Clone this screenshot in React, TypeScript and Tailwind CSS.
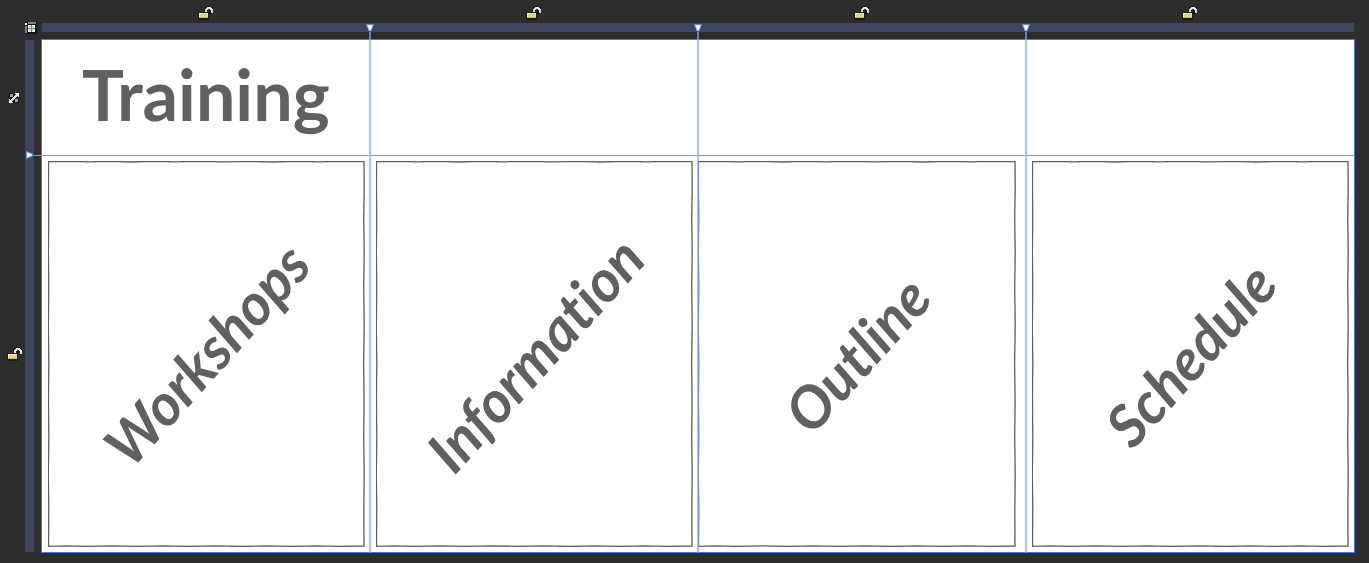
import React from "react";
import { clsx } from "clsx";

const cards = [
  { label: "Workshops", inset: "pl-1.5 pr-[5px]" },
  { label: "Information", inset: "pl-1.5 pr-[5px]" },
  { label: "Outline", inset: "pr-2.5" },
  { label: "Schedule", inset: "pl-1.5 pr-[5px]" },
];

function UnlockIcon() {
  return (
    <svg width="16" height="14" viewBox="0 0 16 14" aria-hidden="true">
      <path d="M0 6h6V2l3-2h4l2 2v6h-4v6H0z" fill="#191919" fillOpacity="0.8" />
      <path d="M7 6V3h1V2h1V1h4v1h1v1h1v4h-2V4h-1V3h-2v1H9v2z" fill="#e9e9e9" />
      <path d="M1 7h9v5H1z" fill="#e8d673" />
      <path d="M1 7h9v1H2v3H1z" fill="#fbf5c5" />
      <path d="M1 11h9v1H1z" fill="#cdb855" />
    </svg>
  );
}

function ExpandIcon() {
  return (
    <svg width="12" height="12" viewBox="0 0 12 12" aria-hidden="true">
      <path d="M1 1h10v10H1z" fill="#151515" />
      <path d="M2 2h3v3H2zM7 7h3v3H7z" fill="#8ea3dc" />
      <path d="M7 1h4v4h-1V4H9v1H8v1H7v1H6v1H5v1H4v1h1v1H1V7h1v1h1V7h1V6h1V5h1V4h1V3h1V2H7z" fill="#f6f6ee" />
    </svg>
  );
}

function GridHandleIcon() {
  return (
    <svg width="12" height="12" viewBox="0 0 12 12" aria-hidden="true">
      <path d="M0 0h12v12H0z" fill="#161616" />
      <path d="M3 0h8v2H3zM0 4h2v7H0z" fill="#858585" />
      <path d="M0 1h2v2H0zM3 3h7v7H3z" fill="#ffffff" />
      <path d="M6 3h1v7H6zM3 6h7v1H3z" fill="#5f7fc4" />
      <path d="M4 4h5v5H4z" fill="#7b8bb0" fillOpacity="0.35" />
    </svg>
  );
}

function ColumnMarker() {
  return (
    <svg width="8" height="8" viewBox="0 0 8 8" aria-hidden="true">
      <path d="M0.500 0.500h7L5 7H3z" fill="#ffffff" stroke="#5b8cf5" />
    </svg>
  );
}

function RowMarker() {
  return (
    <svg width="8" height="8" viewBox="0 0 8 8" aria-hidden="true">
      <path d="M0.500 0.500v7L7 4.500v-1z" fill="#ffffff" stroke="#5b8cf5" />
    </svg>
  );
}

function SketchFrame() {
  return (
    <svg
      className="absolute inset-0 h-full w-full"
      viewBox="0 0 317 386"
      preserveAspectRatio="none"
      aria-hidden="true"
    >
      <path
        d="M0.500 0.500L24 0.300L40 0.800L61 0.400L84 1L103 0.300L128 0.800L149 0.300L176 0.900L203 0.400L225 1L247 0.300L272 0.800L292 0.300L316 0.700L316.200 28L315.700 57L316.200 91L315.700 126L316.200 165L315.600 203L316.100 239L315.700 276L316.200 312L315.800 349L316 385L291 385.300L269 384.800L244 385.400L218 384.900L194 385.500L167 384.900L141 385.400L115 384.800L90 385.400L64 384.900L38 385.400L18 384.900L0.500 385.300L0.800 349L0.300 312L0.800 276L0.400 238L0.800 203L0.300 165L0.800 126L0.300 90L0.800 56L0.400 27Z"
        fill="none"
        stroke="#5e5e5e"
        strokeWidth="1.3"
        vectorEffect="non-scaling-stroke"
      />
    </svg>
  );
}

export default function App() {
  return (
    <div className="flex min-h-screen bg-[#2d2d2d] pr-3.5 pb-2.5 font-['Lato',sans-serif] text-[#606060] [font-variant-ligatures:none]">
      <aside className="flex w-[41px] shrink-0 flex-col">
        <div className="flex h-10 items-center justify-end pt-4 pr-1">
          <button type="button" aria-label="Select grid">
            <GridHandleIcon />
          </button>
        </div>
        <div className="flex flex-1">
          <div className="flex w-[25px] flex-col">
            <div className="flex h-[115px] items-center justify-center pl-[3px]">
              <button type="button" aria-label="Resize row 1">
                <ExpandIcon />
              </button>
            </div>
            <div className="flex flex-1 items-center justify-center pl-[5px]">
              <button type="button" aria-label="Unlock row 2">
                <UnlockIcon />
              </button>
            </div>
          </div>
          <div className="mb-px w-[9px] bg-[#3d4860]" />
        </div>
      </aside>

      <main className="relative flex min-w-0 flex-1 flex-col">
        <div className="grid h-[23px] grid-cols-4 px-px pt-1.5">
          {cards.map(({ label }) => (
            <div key={label} className="flex justify-center">
              <button type="button" aria-label={"Unlock " + label} className="h-3.5">
                <UnlockIcon />
              </button>
            </div>
          ))}
        </div>
        <div className="mx-px h-[9px] bg-[#3d4860]" />

        <section className="mt-[7px] flex flex-1 flex-col border border-[#4a78e0] bg-white">
          <header className="relative flex h-[116px] items-center border-b border-[#6f9bf5] pb-2 pl-10">
            <h1 className="text-[70px] leading-none font-bold">Training</h1>
            <span className="absolute -bottom-1 -left-4">
              <RowMarker />
            </span>
            <span className="absolute -bottom-px -left-2 h-px w-2 bg-[#6f9bf5]" />
          </header>
          <div className="grid flex-1 grid-cols-4">
            {cards.map(({ label, inset }) => (
              <div key={label} className={clsx("flex py-[5px]", inset)}>
                <article className="relative flex min-h-80 flex-1 items-center justify-center">
                  <SketchFrame />
                  <h2 className="-rotate-48 text-[58px] leading-none font-bold italic">{label}</h2>
                </article>
              </div>
            ))}
          </div>
        </section>

        <div className="pointer-events-none absolute inset-x-px top-6 bottom-0 grid grid-cols-4">
          {cards.map(({ label }, index) => (
            <div key={label} className="relative">
              {index > 0 && (
                <div className="absolute inset-y-0 -left-1 flex w-2 flex-col items-center">
                  <ColumnMarker />
                  <span className="w-0.5 flex-1 bg-[#84aaf8]/70" />
                </div>
              )}
            </div>
          ))}
        </div>
      </main>
    </div>
  );
}
